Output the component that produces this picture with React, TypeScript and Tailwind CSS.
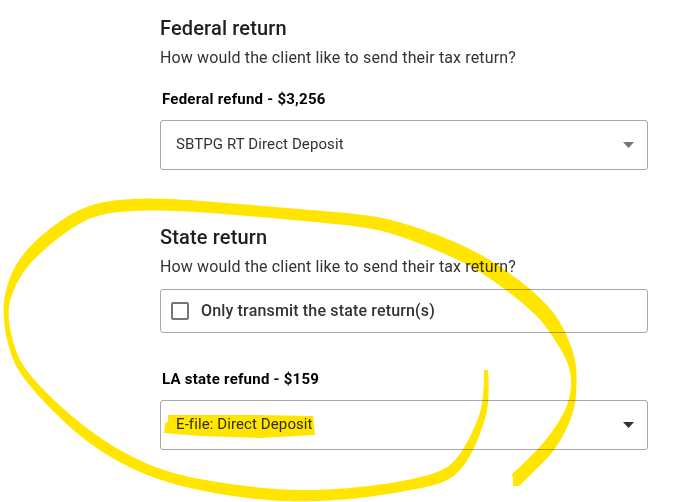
type Pt = [number, number, number];

// hand-drawn marker strokes: x, y, thickness
const loopStroke: Pt[] = [
  [516, 480, 13], [533, 463, 13], [549, 447, 13], [564, 423, 10], [572, 403, 7], [574, 383, 5],
  [572, 360, 8], [560, 337, 13], [546, 313, 15], [510, 283, 16], [479, 262, 15], [446, 246, 15],
  [389, 225, 13], [346, 219, 12], [233, 209, 11], [160, 204, 12], [117, 206, 12], [83, 213, 12],
  [48, 238, 13], [21, 264, 11], [9, 292, 7], [6, 308, 5], [7, 328, 5], [14, 355, 6], [27, 378, 7],
  [63, 415, 9], [100, 445, 11], [150, 472, 10], [200, 485, 11], [260, 494, 12], [307, 496, 11],
  [360, 493, 11], [410, 485, 10], [443, 477, 12], [458, 465, 10], [470, 447, 9], [480, 423, 7],
  [486, 403, 6], [486, 370, 4],
];

function strokeOutline(pts: Pt[]): string {
  const raw: Pt[] = [];
  for (let i = 0; i < pts.length - 1; i++) {
    const p0 = pts[Math.max(i - 1, 0)];
    const p1 = pts[i];
    const p2 = pts[i + 1];
    const p3 = pts[Math.min(i + 2, pts.length - 1)];
    for (let s = 0; s < 10; s++) {
      const t = s / 10;
      const at = (k: number) =>
        0.5 * (2 * p1[k] + (p2[k] - p0[k]) * t + (2 * p0[k] - 5 * p1[k] + 4 * p2[k] - p3[k]) * t * t + (3 * p1[k] - p0[k] - 3 * p2[k] + p3[k]) * t * t * t);
      raw.push([at(0), at(1), at(2)]);
    }
  }
  raw.push(pts[pts.length - 1]);

  // moving average so the marker edge stays smooth
  const dense: Pt[] = raw.map((_, i) => {
    const r = Math.min(7, i, raw.length - 1 - i);
    const sum: Pt = [0, 0, 0];
    for (let j = i - r; j <= i + r; j++) {
      sum[0] += raw[j][0];
      sum[1] += raw[j][1];
      sum[2] += raw[j][2];
    }
    const n = 2 * r + 1;
    return [sum[0] / n, sum[1] / n, sum[2] / n];
  });

  const left: string[] = [];
  const right: string[] = [];
  dense.forEach((p, i) => {
    const a = dense[Math.max(i - 1, 0)];
    const b = dense[Math.min(i + 1, dense.length - 1)];
    const dx = b[0] - a[0];
    const dy = b[1] - a[1];
    const len = Math.hypot(dx, dy) || 1;
    const nx = (-dy / len) * (p[2] / 2);
    const ny = (dx / len) * (p[2] / 2);
    left.push(`${(p[0] + nx).toFixed(1)} ${(p[1] + ny).toFixed(1)}`);
    right.unshift(`${(p[0] - nx).toFixed(1)} ${(p[1] - ny).toFixed(1)}`);
  });
  return `M${left.join("L")}L${right.join("L")}Z`;
}

function SelectBox({ value, caret }: { value: string; caret: string }) {
  return (
    <div className="flex h-[50px] items-center justify-between rounded-[3px] border border-[#a8a8a8] pl-[15px] pr-[13px]">
      <span className="-translate-y-[1px] text-[15px] tracking-[0.1px] text-[#333]">{value}</span>
      <svg width="11" height="6" viewBox="0 0 11 6" className={caret}>
        <path d="M0 0h11L5.5 6z" fill="currentColor" />
      </svg>
    </div>
  );
}

export default function App() {
  return (
    <div className="relative h-[502px] w-[692px] overflow-hidden bg-white font-['Roboto',sans-serif]">
      <div className="ml-[160px] w-[488px] pt-[16px]">
        <h2 className="text-[20px] leading-[24px] font-medium tracking-[0.15px] text-[#1f1f1f]">Federal return</h2>
        <p className="mt-[7px] text-[16px] leading-[22px] tracking-[0.14px] text-[#333]">How would the client like to send their tax return?</p>
        <p className="mt-[20px] ml-[2px] text-[15px] leading-[20px] font-bold tracking-[0.25px] text-black">Federal refund - $3,256</p>
        <div className="mt-[11px]">
          <SelectBox value="SBTPG RT Direct Deposit" caret="text-[#757575]" />
        </div>

        <h2 className="mt-[55px] text-[20px] leading-[24px] font-medium tracking-[0.15px] text-[#1f1f1f]">State return</h2>
        <p className="mt-[7px] text-[16px] leading-[22px] tracking-[0.14px] text-[#333]">How would the client like to send their tax return?</p>
        <div className="mt-[11px] flex h-[44px] items-center gap-[12px] rounded-[3px] border border-[#a8a8a8] pl-[10px]">
          <span className="h-[18px] w-[18px] rounded-[2px] border-2 border-[#757575]" />
          <span className="text-[16px] font-medium tracking-[0.16px] text-[#333]">Only transmit the state return(s)</span>
        </div>
        <p className="mt-[36px] ml-[2px] text-[15px] leading-[20px] font-bold tracking-[0.25px] text-black">LA state refund - $159</p>
        <div className="mt-[11px]">
          <SelectBox value="E-file: Direct Deposit" caret="text-[#333]" />
        </div>
      </div>

      <svg width="692" height="502" viewBox="0 0 692 502" className="absolute inset-0 mix-blend-multiply">
        <path d={strokeOutline(loopStroke)} fill="#ffe500" />
        <path d="M513 473L513 486L519 486L531 474L522 466z" fill="#ffe500" />
        <path d="M168 415L200 415L260 415L313 416L315 435L260 438L200 436L164 433L165 423L168 422z" fill="#ffe500" />
      </svg>
    </div>
  );
}
